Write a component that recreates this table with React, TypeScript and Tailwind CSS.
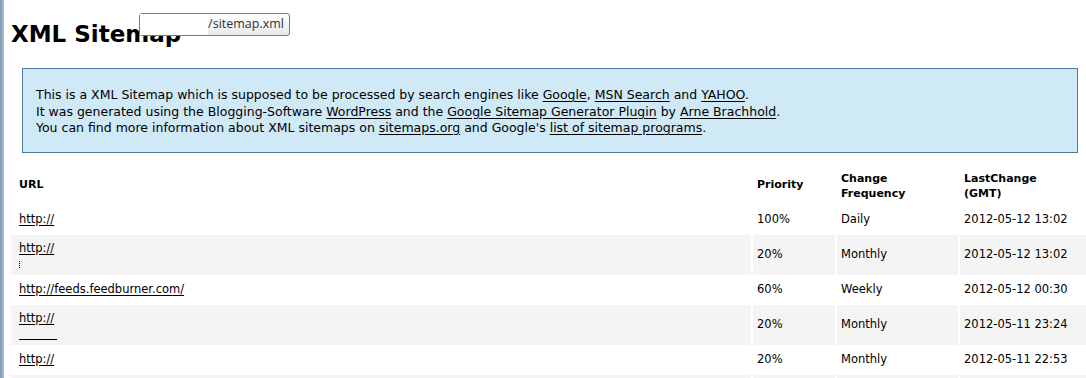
const rows = [
  { url: 'http://', extra: null, priority: '100%', freq: 'Daily', last: '2012-05-12 13:02' },
  { url: 'http://', extra: 'dot', priority: '20%', freq: 'Monthly', last: '2012-05-12 13:02' },
  { url: 'http://feeds.feedburner.com/', extra: null, priority: '60%', freq: 'Weekly', last: '2012-05-12 00:30' },
  { url: 'http://', extra: 'line', priority: '20%', freq: 'Monthly', last: '2012-05-11 23:24' },
  { url: 'http://', extra: null, priority: '20%', freq: 'Monthly', last: '2012-05-11 22:53' },
  { url: 'http://', extra: null, priority: '20%', freq: 'Monthly', last: '2012-05-11 21:40' },
]

const A = ({ children }: { children: React.ReactNode }) => (
  <a href="#" className="text-black underline underline-offset-2">
    {children}
  </a>
)

export default function App() {
  return (
    <div className="flex h-[378px] w-[1086px] overflow-hidden bg-white font-['DejaVu_Sans',sans-serif] text-black">
      <div className="w-[4px] shrink-0 bg-gradient-to-r from-[#7e97b0] to-[#a9bccf]" />
      <div className="relative min-w-0 flex-1">
        <h1 className="pl-[7px] pt-[19px] text-[23px] font-bold leading-[30px]">XML Sitemap</h1>

        <div className="absolute left-[135px] top-[13px] flex h-[23px] w-[151px] items-center justify-end rounded-[3px] border border-[#7a7a7a] bg-gradient-to-b from-white to-[#e8e9ee] pr-[5px] font-['Open_Sans',sans-serif] text-[12.5px] text-[#333]">
          <div className="mr-auto h-full w-[72px] bg-white" />
          /sitemap.xml
        </div>

        <div className="ml-[18px] mr-[8px] mt-[19px] border border-[#4f7a9c] bg-[#d0e9f6] px-[13px] pb-[15px] pt-[18px] text-[12.5px] leading-[16.5px]">
          <p>
            This is a XML Sitemap which is supposed to be processed by search engines like{' '}
            <A>Google</A>, <A>MSN Search</A> and <A>YAHOO</A>.
          </p>
          <p>
            It was generated using the Blogging-Software <A>WordPress</A> and the{' '}
            <A>Google Sitemap Generator Plugin</A> by <A>Arne Brachhold</A>.
          </p>
          <p>
            You can find more information about XML sitemaps on <A>sitemaps.org</A> and Google's{' '}
            <A>list of sitemap programs</A>.
          </p>
        </div>

        <table className="ml-[5px] mt-[12px] w-[1110px] table-fixed border-separate border-spacing-[2px] text-[11.5px]">
          <thead>
            <tr className="h-[38px] text-left align-middle text-[11px] font-bold">
              <th className="w-[740px] pl-[8px]">URL</th>
              <th className="w-[82px] pl-[4px]">Priority</th>
              <th className="w-[121px] pl-[4px] leading-[15px]">
                Change
                <br />
                Frequency
              </th>
              <th className="pl-[4px] leading-[15px]">
                LastChange
                <br />
                (GMT)
              </th>
            </tr>
          </thead>
          <tbody>
            {rows.map((r, i) => (
              <tr key={i} className={i % 2 === 1 ? 'bg-[#f4f4f4]' : ''}>
                <td className={`pl-[8px] ${r.extra ? 'h-[40px] pt-[5px] align-top' : 'h-[26px]'}`}>
                  <A>{r.url}</A>
                  {r.extra === 'dot' && <div className="mt-[4px] h-[7px] w-[1px] border-l border-dotted border-black" />}
                  {r.extra === 'line' && <div className="mt-[12px] h-[1px] w-[38px] bg-black" />}
                </td>
                <td className="pl-[4px]">{r.priority}</td>
                <td className="pl-[4px]">{r.freq}</td>
                <td className="pl-[4px]">{r.last}</td>
              </tr>
            ))}
          </tbody>
        </table>
      </div>
    </div>
  )
}
